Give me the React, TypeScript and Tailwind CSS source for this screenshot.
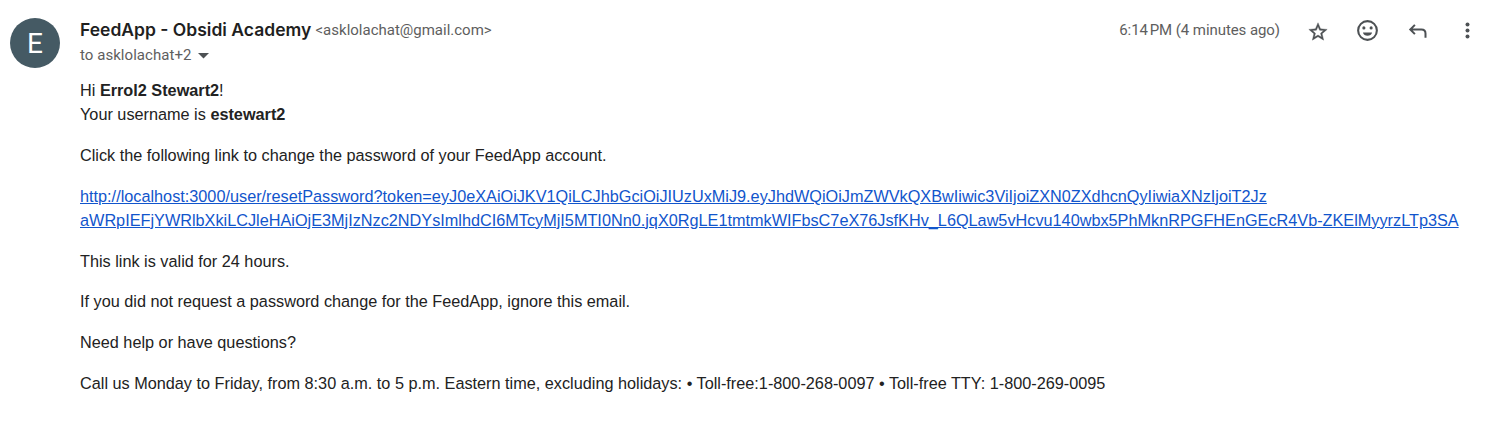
import React from "react";

const headerFont = "font-[Roboto,sans-serif]";

function Star() {
  return (
    <svg className="h-[22px] w-[22px]" viewBox="0 0 24 24" fill="#4d5154" stroke="#4d5154" strokeWidth="0.4">
      <path d="M22 10.24l-7.19-.62L12 3 9.19 9.63 2 10.24l5.46 4.73L5.82 22 12 18.27 18.18 22l-1.63-7.03L22 10.24zM12 16.4l-3.76 2.27 1-4.28-3.32-2.88 4.38-.38L12 7.1l1.71 4.04 4.38.38-3.32 2.88 1 4.28L12 16.4z" />
    </svg>
  );
}

function Smile() {
  return (
    <svg className="h-[25px] w-[25px]" viewBox="0 0 24 24" fill="#4d5154">
      <path d="M12 2a10 10 0 1 0 0 20 10 10 0 0 0 0-20zm0 18a8 8 0 1 1 0-16 8 8 0 0 1 0 16z" />
      <circle cx="8.5" cy="9.5" r="1.5" />
      <circle cx="15.5" cy="9.5" r="1.5" />
      <path d="M7.6 13.8h8.8c-.6 2-2.2 3.2-4.4 3.2s-3.8-1.2-4.4-3.2z" />
    </svg>
  );
}

function Reply() {
  return (
    <svg className="h-[25px] w-[25px]" viewBox="0 0 25 25" fill="none" stroke="#4d5154" strokeWidth="2">
      <path d="M9.9 6.9 5.3 11.5l4.6 4.6M5.3 11.5h11.1q4.1 0 4.1 4.1v4.1" />
    </svg>
  );
}

function More() {
  return (
    <svg className="h-[25px] w-[25px]" viewBox="0 0 25 25" fill="#4d5154">
      <circle cx="12.5" cy="6.6" r="2" />
      <circle cx="12.5" cy="12.5" r="2" />
      <circle cx="12.5" cy="18.4" r="2" />
    </svg>
  );
}

export default function App() {
  return (
    <main className="flex h-[428px] w-[1487px] items-start overflow-hidden bg-white pl-[10px] font-['Liberation_Sans',Arial,sans-serif] text-[#222]">
      <div className={`${headerFont} mt-[18px] flex h-[50px] w-[50px] shrink-0 items-center justify-center rounded-full bg-[#455a64] pt-px text-[28px] leading-none text-white`}>
        E
      </div>
      <div className="ml-5 min-w-0 flex-1">
        <header className={`${headerFont} flex h-[78.3px] items-start justify-between`}>
          <div className="pt-[18px]">
            <div className="flex h-6 items-center whitespace-nowrap">
              <h1 className="w-[235.5px] font-[Inter,sans-serif] text-[17.5px] font-semibold text-[#1f1f1f]">FeedApp - Obsidi Academy</h1>
              <span className="text-[15px] text-[#5e5e5e]">&lt;asklolachat@gmail.com&gt;</span>
            </div>
            <div className="flex h-[27px] items-center whitespace-nowrap text-[15px] tracking-[0.05px] text-[#5e5e5e]">
              <span className="w-[118px]">to asklolachat+2</span>
              <svg className="h-[6px] w-[11px]" viewBox="0 0 11 6" fill="#4d5154">
                <path d="M0 0h11L5.5 5.6z" />
              </svg>
            </div>
          </div>
          <div className="flex items-center pr-[7px] pt-[18px]">
            <span className="mr-[27px] whitespace-nowrap text-[15px] tracking-[-0.07px] text-[#5e5e5e]">6:14{"\u202f"}PM (4 minutes ago)</span>
            <span className="mr-[26px] flex"><Star /></span>
            <span className="mr-[25px] flex"><Smile /></span>
            <span className="mr-[25px] flex"><Reply /></span>
            <More />
          </div>
        </header>
        <div className="flex flex-col gap-[16.75px] whitespace-nowrap text-[16.25px] leading-6">
          <p>
            <span>Hi <b>Errol2 Stewart2</b>!</span>
            <br />
            <span>Your username is <b>estewart2</b></span>
          </p>
          <p>Click the following link to change the password of your FeedApp account.</p>
          <p>
            <a href="#" className="text-[#1155cc] underline">
              http://localhost:3000/user/resetPassword?token=eyJ0eXAiOiJKV1QiLCJhbGciOiJIUzUxMiJ9.eyJhdWQiOiJmZWVkQXBwIiwic3ViIjoiZXN0ZXdhcnQyIiwiaXNzIjoiT2Jz
              <br />
              aWRpIEFjYWRlbXkiLCJleHAiOjE3MjIzNzc2NDYsImlhdCI6MTcyMjI5MTI0Nn0.jqX0RgLE1tmtmkWIFbsC7eX76JsfKHv_L6QLaw5vHcvu140wbx5PhMknRPGFHEnGEcR4Vb-ZKElMyyrzLTp3SA
            </a>
          </p>
          <p>This link is valid for 24 hours.</p>
          <p>If you did not request a password change for the FeedApp, ignore this email.</p>
          <p>Need help or have questions?</p>
          <p>Call us Monday to Friday, from 8:30 a.m. to 5 p.m. Eastern time, excluding holidays: • Toll-free:1-800-268-0097 • Toll-free TTY: 1-800-269-0095</p>
        </div>
      </div>
    </main>
  );
}
